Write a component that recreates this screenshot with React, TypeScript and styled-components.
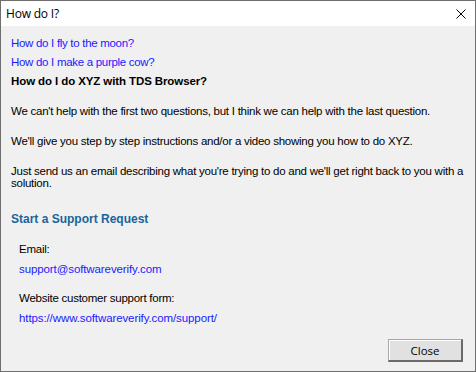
import React from 'react';
import styled, { createGlobalStyle } from 'styled-components';

const GlobalStyle = createGlobalStyle`
  html, body {
    margin: 0;
    padding: 0;
    background: #ffffff;
  }
`;

const Window = styled.div`
  width: 476px;
  height: 372px;
  box-sizing: border-box;
  border: 1px solid #6e6e6e;
  background: #f0f0f0;
  display: flex;
  flex-direction: column;
  font-family: 'Liberation Sans', Arial, sans-serif;
  color: #000;
`;

const TitleBar = styled.div`
  height: 25px;
  background: #fff;
  display: flex;
  align-items: center;
  justify-content: space-between;
  padding: 0 9px 0 5px;
  flex-shrink: 0;
`;

const Title = styled.span`
  font-family: 'Open Sans', 'Liberation Sans', sans-serif;
  font-size: 12px;
  letter-spacing: -0.2px;
`;

const CloseX = styled.svg`
  width: 10px;
  height: 10px;
  display: block;
`;

const Body = styled.div`
  flex: 1;
  display: flex;
  flex-direction: column;
  padding: 8px 6px 9px 10px;
`;

const QuestionLink = styled.a`
  font-size: 11.5px;
  line-height: 19px;
  color: #1a1aff;
  text-decoration: none;
  letter-spacing: -0.3px;
`;

const Heading = styled.div`
  font-weight: bold;
  font-size: 11.5px;
  line-height: 19px;
  letter-spacing: -0.1px;
`;

const Para = styled.p<{ $gap: number }>`
  margin: ${({ $gap }) => $gap}px 0 0 0;
  font-size: 11.5px;
  line-height: 12px;
  letter-spacing: -0.25px;
`;

const Section = styled.div`
  margin-top: 22px;
  font-weight: bold;
  font-size: 12px;
  line-height: 16px;
  color: #1b6499;
`;

const Contact = styled.div`
  display: flex;
  flex-direction: column;
  padding-left: 8px;
  margin-top: 15px;
`;

const Label = styled.div<{ $gap: number }>`
  margin-top: ${({ $gap }) => $gap}px;
  font-size: 11.5px;
  line-height: 14px;
  letter-spacing: -0.25px;
`;

const ContactLink = styled.a`
  margin-top: 6px;
  font-size: 11.5px;
  line-height: 14px;
  color: #1a1aff;
  text-decoration: none;
  letter-spacing: -0.1px;
`;

const Footer = styled.div`
  margin-top: auto;
  display: flex;
  justify-content: flex-end;
  padding-right: 6px;
`;

const Button = styled.button`
  width: 75px;
  height: 23px;
  box-sizing: border-box;
  background: #e1e1e1;
  border-style: solid;
  border-width: 1px 2px 2px 1px;
  border-color: #a6a6a6 #6a6a6a #6a6a6a #a6a6a6;
  box-shadow: inset 1px 1px 0 #ffffff;
  font-family: 'Open Sans', 'Liberation Sans', sans-serif;
  font-size: 11.5px;
  color: #000;
  padding: 0;
`;

export default function App() {
  return (
    <>
      <GlobalStyle />
      <Window>
        <TitleBar>
          <Title>How do I?</Title>
          <CloseX viewBox="0 0 10 10">
            <path d="M0.5 0.5 L9.5 9.5 M9.5 0.5 L0.5 9.5" stroke="#000" strokeWidth="1" fill="none" />
          </CloseX>
        </TitleBar>
        <Body>
          <QuestionLink href="#">How do I fly to the moon?</QuestionLink>
          <QuestionLink href="#">How do I make a purple cow?</QuestionLink>
          <Heading>How do I do XYZ with TDS Browser?</Heading>
          <Para $gap={14}>
            We can't help with the first two questions, but I think we can help with the last question.
          </Para>
          <Para $gap={18}>
            We'll give you step by step instructions and/or a video showing you how to do XYZ.
          </Para>
          <Para $gap={18}>
            Just send us an email describing what you're trying to do and we'll get right back to you with a
            solution.
          </Para>
          <Section>Start a Support Request</Section>
          <Contact>
            <Label $gap={0}>Email:</Label>
            <ContactLink href="#">support@softwareverify.com</ContactLink>
            <Label $gap={15}>Website customer support form:</Label>
            <ContactLink href="#">https://www.softwareverify.com/support/</ContactLink>
          </Contact>
          <Footer>
            <Button>Close</Button>
          </Footer>
        </Body>
      </Window>
    </>
  );
}
